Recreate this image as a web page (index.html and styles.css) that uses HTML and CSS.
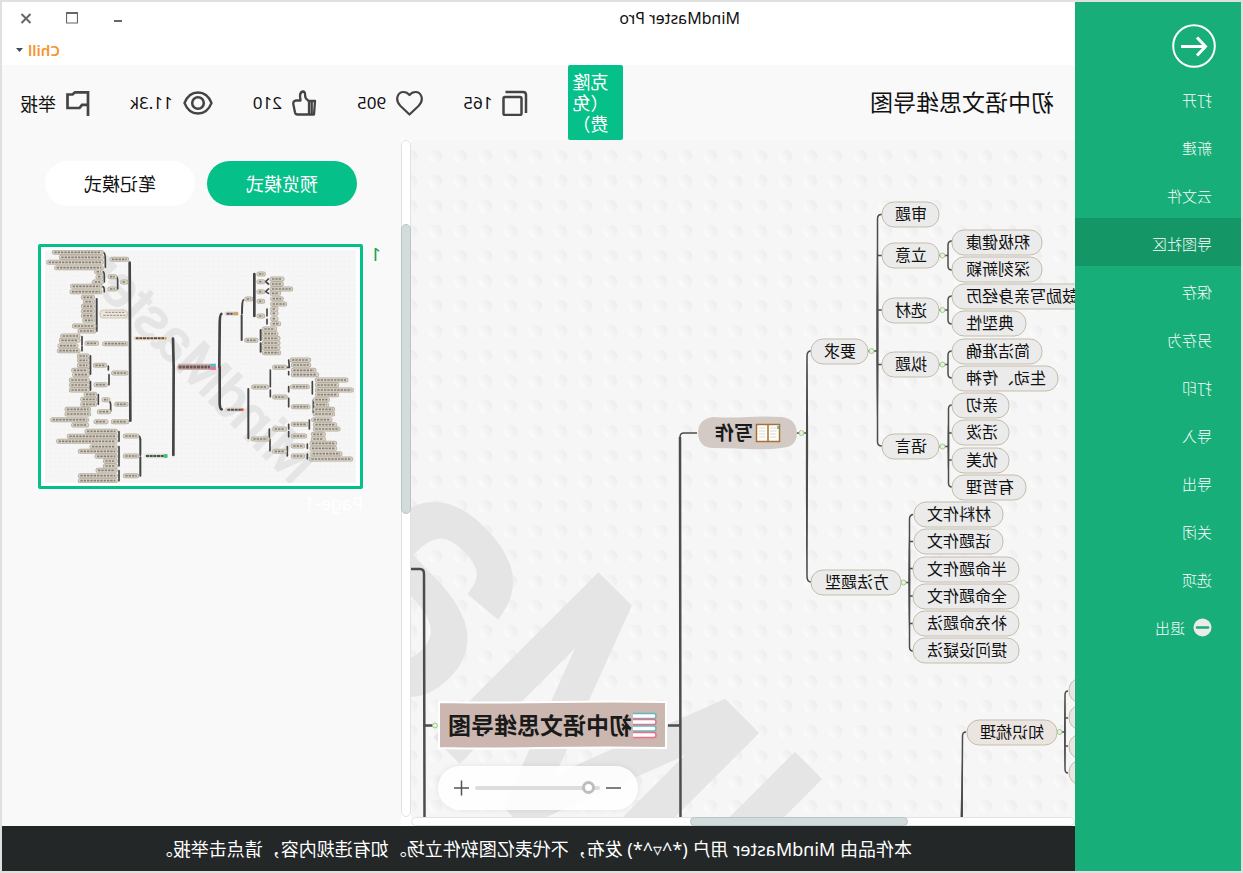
FILE: index.html
```html
<!DOCTYPE html>
<html lang="zh-CN">
<head>
<meta charset="utf-8">
<title>MindMaster Pro</title>
<link rel="stylesheet" href="styles.css">
</head>
<body>
<div class="app">
  <nav class="sidebar">
    <button class="back" aria-label="返回">
      <svg width="44" height="44" viewBox="0 0 44 44" fill="none" stroke="#fff"><circle cx="22" cy="22" r="20.8" stroke-width="2"/><path d="M35 22.500H10M19 13.500L10.500 22.500L19 31.500" stroke-width="3"/></svg>
    </button>
    <ul class="menu">
      <li><button class="item">打开</button></li>
      <li><button class="item">新建</button></li>
      <li><button class="item">云文件</button></li>
      <li><button class="item active">导图社区</button></li>
      <li><button class="item">保存</button></li>
      <li><button class="item">另存为</button></li>
      <li><button class="item">打印</button></li>
      <li><button class="item">导入</button></li>
      <li><button class="item">导出</button></li>
      <li><button class="item">关闭</button></li>
      <li><button class="item">选项</button></li>
      <li><button class="item"><svg width="19" height="19" viewBox="0 0 19 19"><circle cx="9.500" cy="9.500" r="9" fill="#ebebeb"/><path d="M4 9.500H15" stroke="#17ae79" stroke-width="2.500" stroke-linecap="round"/></svg>退出</button></li>
    </ul>
  </nav>
  <div class="main">
    <header class="titlebar">
      <div class="title-row">
        <h1>MindMaster Pro</h1>
        <div class="window-buttons">
          <button aria-label="最小化"><svg width="12" height="12" viewBox="0 0 12 12"><path d="M2 9H10" stroke="#666" stroke-width="2"/></svg></button>
          <button aria-label="最大化"><svg width="12" height="12" viewBox="0 0 12 12" fill="none" stroke="#666"><path d="M0 1H12" stroke-width="2"/><path d="M0.500 1V11H11.500V1" stroke-width="1.200"/></svg></button>
          <button aria-label="关闭"><svg width="12" height="12" viewBox="0 0 12 12"><path d="M1.500 2L10.500 11M10.500 2L1.500 11" stroke="#666" stroke-width="2"/></svg></button>
        </div>
      </div>
      <div class="user-row">
        <button class="user">Chill <svg width="7" height="4" viewBox="0 0 7 4"><path d="M0 0H7L3.500 4Z" fill="#444b5c"/></svg></button>
      </div>
    </header>

    <section class="toolbar">
      <h2>初中语文思维导图</h2>
      <div class="actions">
        <button class="clone">克隆（免费）</button>
        <div class="stats">
          <span class="stat"><svg width="26" height="26" viewBox="0 0 26 26" fill="none" stroke="#444" stroke-width="2.500"><rect x="6.500" y="7" width="18" height="18" rx="1.500"/><path d="M22.500 2H5Q2 2 2 5V23"/></svg>165</span>
          <span class="stat"><svg width="27" height="26" viewBox="0 0 27 26" fill="none" stroke="#444" stroke-width="2.200"><path d="M13.500 24.500L4.500 16C-1.500 10 1.500 2 7.500 2C10.500 2 12.300 3.500 13.500 5C14.700 3.500 16.500 2 19.500 2C25.500 2 28.500 10 22.500 16Z" stroke-linejoin="round"/></svg>905</span>
          <span class="stat"><svg width="25" height="26" viewBox="0 0 25 26" fill="none" stroke="#444" stroke-width="2.300" stroke-linejoin="round"><path d="M2 11H8V24.500H3ZM8 24.500V11.500L11 8.500Q12 7 12 4Q12 1.500 14 1.500Q17 2 17 6L16.500 10.500H21Q24.500 11 23.500 15L22 22.500Q21.500 24.500 19.500 24.500ZM5.300 12V24"/></svg>210</span>
          <span class="stat"><svg width="30" height="24" viewBox="0 0 30 24" fill="none" stroke="#444"><path d="M1.500 12C7 -2 23 -2 28.500 12C23 26 7 26 1.500 12Z" stroke-width="2.300"/><circle cx="15" cy="12" r="5.800" stroke-width="2.600"/></svg>11.3k</span>
          <button class="stat report"><svg width="24" height="26" viewBox="0 0 24 26" fill="none" stroke="#444" stroke-width="2.700"><path d="M2 1V26M2 2.300H15L17.500 4.500H22.500V18H10.500L8 14.800H2"/></svg>举报</button>
        </div>
      </div>
    </section>

    <div class="work">
      <div class="viewport">
        <div class="canvas">
          <svg class="mindmap" role="img" aria-label="思维导图画布">
            <defs>
              <linearGradient id="bump" x1="0" y1="0.200" x2="1" y2="0.800"><stop offset="0" stop-color="#ececec"/><stop offset="0.500" stop-color="#f4f4f4"/><stop offset="1" stop-color="#fdfdfd"/></linearGradient>
              <pattern id="bumps" width="25" height="25" x="2" y="4" patternUnits="userSpaceOnUse"><circle cx="12.500" cy="12.500" r="6.800" fill="url(#bump)"/></pattern>
            </defs>
            <rect width="100%" height="100%" fill="url(#bumps)"/>
            <text class="watermark" transform="translate(-36 1268) rotate(-45)">MindMaster</text>

            <g class="links thin">
              <path d="M123 101Q127 101 127 105V126Q127 130 123 130M127 115.500H136"/>
              <path d="M123 156Q127 156 127 160V180Q127 184 123 184M127 170H136"/>
              <path d="M123 211Q127 211 127 215V234Q127 238 123 238M127 224.500H136"/>
              <path d="M123 265Q126.500 265 126.500 269V343Q126.500 347 123 347M127 306.500H136M123 293H127M123 320H127"/>
              <path d="M193 74.500Q197.500 74 197.500 79V302Q197.500 306 193 306M193 115.500H197M193 170H197M193 224.500H197M197 211H207"/>
              <path d="M162 374.500Q165.500 375 165.500 379V507Q165.500 511 162 511M162 401.500H166M162 428.500H166M162 456H166M162 483.500H166M166 442.500H174"/>
              <path d="M264 211Q268 211 268 216V436Q268 442 264 442M268 293H278"/>
              <path d="M7 551Q10 551 10 555V629Q10 633 7 633M7 578H10M7 606H10M10 592H18"/>
              <path d="M109 592Q112.500 592 112.500 596L113 677M378 293H391Q395 293 395 297"/>
            </g>
            <g class="links thick">
              <path d="M395 297L394.500 677M395 585.500H407M641 585.500H652"/>
              <path d="M664 429H655Q651 429 651 434L650.500 677"/>
            </g>
            <g class="swell">
              <path d="M268 215Q265.500 300 268.500 436Q270 300 268 215ZM197.500 80Q195.500 200 197.500 300Q200 200 197.500 80ZM126.500 270Q125 306 126.500 343Q128.500 306 126.500 270ZM165.500 380Q164 440 165.500 506Q168 440 165.500 380ZM10 556Q9 592 10 628Q12 592 10 556ZM112.500 600L112 677H114.500Z"/>
            </g>

            <g class="collapse">
              <circle cx="132.500" cy="115.500" r="2.500"/><circle cx="132.500" cy="170" r="2.500"/><circle cx="132.500" cy="224.500" r="2.500"/><circle cx="132.500" cy="306.500" r="2.500"/>
              <circle cx="203.500" cy="211" r="2.500"/><circle cx="273.500" cy="293" r="2.500"/><circle cx="171.500" cy="442.500" r="2.500"/><circle cx="15.500" cy="592" r="2.500"/><circle cx="640" cy="585.500" r="2.500"/>
            </g>

            <g class="leaf">
              <rect x="136" y="62" width="57" height="25" rx="12"/><text x="164" y="80">审题</text>
              <rect x="136" y="103" width="57" height="25" rx="12"/><text x="164" y="121">立意</text>
              <rect x="136" y="158" width="57" height="25" rx="12"/><text x="164" y="176">选材</text>
              <rect x="136" y="212" width="57" height="25" rx="12"/><text x="164" y="230">拟题</text>
              <rect x="136" y="294" width="57" height="25" rx="12"/><text x="164" y="312">语言</text>

              <rect x="33" y="90" width="90" height="25" rx="12"/><text x="77" y="108">积极健康</text>
              <rect x="33" y="117" width="90" height="25" rx="12"/><text x="77" y="135">深刻新颖</text>
              <rect x="-15" y="144" width="138" height="25" rx="12"/><text x="53" y="162">鼓励写亲身经历</text>
              <rect x="49" y="171" width="74" height="25" rx="12"/><text x="85" y="189">典型性</text>
              <rect x="33" y="199" width="90" height="25" rx="12"/><text x="77" y="217">简洁准确</text>
              <rect x="17" y="226" width="106" height="25" rx="12"/><text x="69" y="244">生动、传神</text>
              <rect x="66" y="253" width="57" height="25" rx="12"/><text x="93" y="271">亲切</text>
              <rect x="66" y="280" width="57" height="25" rx="12"/><text x="93" y="298">活泼</text>
              <rect x="66" y="308" width="57" height="25" rx="12"/><text x="93" y="326">优美</text>
              <rect x="49" y="335" width="74" height="25" rx="12"/><text x="85" y="353">有哲理</text>

              <rect x="72" y="362" width="89" height="25" rx="12"/><text x="116" y="380">材料作文</text>
              <rect x="72" y="389" width="89" height="25" rx="12"/><text x="116" y="407">话题作文</text>
              <rect x="56" y="417" width="106" height="25" rx="12"/><text x="108" y="435">半命题作文</text>
              <rect x="56" y="444" width="106" height="25" rx="12"/><text x="108" y="462">全命题作文</text>
              <rect x="56" y="471" width="106" height="25" rx="12"/><text x="108" y="489">补充命题法</text>
              <rect x="56" y="498" width="106" height="25" rx="12"/><text x="108" y="516">提问设疑法</text>

              <rect x="207" y="199" width="57" height="25" rx="12"/><text x="235" y="217">要求</text>
              <rect x="174" y="430" width="90" height="25" rx="12"/><text x="218" y="448">方法题型</text>
            </g>
            <g class="leaf warm">
              <rect x="18" y="580" width="90" height="25" rx="12"/><text x="63" y="598">知识梳理</text>
              <rect x="-90" y="538" width="96" height="25" rx="12"/>
              <rect x="-90" y="565" width="96" height="25" rx="12"/>
              <rect x="-90" y="594" width="96" height="25" rx="12"/>
              <rect x="-90" y="620" width="96" height="25" rx="12"/>
            </g>

            <g>
              <path d="M294 277Q310 276 328 277T362 277Q377 279 377 293Q376 308 362 308Q345 308 328 309T294 308Q278 307 278 293Q279 278 294 277Z" fill="#d3cac5"/>
              <g fill="#fff" stroke="#a87332" stroke-width="1.500"><path d="M295.500 284.500H318.500V301.500H295.500ZM307 284.500V301.500"/></g>
              <path d="M298.500 288H305M298.500 291H305M298.500 294H305M298.500 297H305M309.500 288H316M309.500 291H316M309.500 294H316M309.500 297H316" stroke="#ddd5cb" stroke-width="1"/>
              <path d="M297 286V289" stroke="#2bb3a5" stroke-width="1.500"/>
              <text class="branch-text" x="322" y="300">写作</text>
            </g>
            <g>
              <path d="M409 562Q460 561 520 562T636 562V608Q590 609 530 608T409 608Z" fill="#cbb6b0" stroke="#fff" stroke-width="2"/>
              <g fill="#fff" stroke-width="1.500">
                <path d="M442 573.500H421Q419 573.500 419 576T421 578.500H442" stroke="#63b9be"/>
                <path d="M442 579.500H421Q419 579.500 419 582T421 584.500H442" stroke="#ea7089"/>
                <path d="M442 586H421Q419 586 419 588.500T421 591H442" stroke="#63b9be"/>
                <path d="M442 592.500H421Q419 592.500 419 595T421 597.500H442" stroke="#ea7089"/>
              </g>
              <text class="root-text" x="443" y="594">初中语文思维导图</text>
            </g>
          </svg>
          <div class="zoom">
            <button aria-label="缩小"><svg width="15" height="16" viewBox="0 0 15 16"><path d="M0 8H15" stroke="#555" stroke-width="1.500"/></svg></button>
            <input type="range" min="0" max="100" value="5" aria-label="缩放">
            <button aria-label="放大"><svg width="15" height="16" viewBox="0 0 15 16"><path d="M0 8H15M7.500 0.500V15.500" stroke="#555" stroke-width="1.500"/></svg></button>
          </div>
        </div>
        <div class="scroll-x"><div class="thumb-x"></div></div>
      </div>
      <div class="scroll-y"><div class="thumb-y"></div></div>

      <aside class="pages">
        <div class="tabs">
          <button class="tab selected">预览模式</button>
          <button class="tab">笔记模式</button>
        </div>
        <div class="page">
          <span class="number">1</span>
          <figure>
            <button class="preview" aria-label="Page-1">
              <svg viewBox="0 0 933 699">
                <defs>
                  <pattern id="specks" width="14" height="14" patternUnits="userSpaceOnUse"><circle cx="7" cy="7" r="3" fill="#f0f0f0"/></pattern>
                  <g id="nodes">
                    <path d="M103 67H244M124 82H244M86 97H244M110 113H244M276 88H320M230 125H242M234 140H242M224 156H244M270 140H284M158 169H240M156 185H240M270 177H284M308 156H318"/>
                    <path d="M190 202H218M196 215H218M190 229H218M190 243H218M190 257H218M194 271H218M163 288H222M180 303H222M128 318H174M124 331H174M120 347H168M118 362H174M201 340H230M254 341H318"/>
                    <path d="M178 378H202M178 391H202M178 406H202M161 421H202M164 434H202M154 450H202M154 465H202M154 480H202M226 406H254M228 464H256M281 429H318"/>
                    <path d="M198 493H224M188 508H224M188 523H224M141 538H206M141 552H206M98 569H200M161 585H200M252 509H264M238 545H266M290 523H318M228 575H258M280 575H320"/>
                    <path d="M201 604H286M148 619H286M116 634H286M316 618H350M216 650H286M181 664H286M231 679H286M256 693H286M256 708H286M316 678H350M234 721H286M181 737H286M181 752H286M316 737H350"/>
                    <path d="M717 132H730M717 155H728M717 185H728M717 214H728M717 258H728M756 147H786M756 162H784M756 177H812M756 190H776M758 206H784M758 222H794M758 237H768M758 250H768M758 266H768M758 281H776M680 207H692M680 331H708"/>
                    <path d="M733 297H764M733 311H768M733 325H774M733 339H774M733 353H774M733 368H776M816 390H866M820 405H866M820 421H882M820 434H890M764 412H794M892 450H978M892 465H950M892 480H994M892 494H950M818 470H862"/>
                    <path d="M886 509H922M888 524H920M886 538H938M886 552H938M820 530H864M764 501H796M701 471H740M881 569H930M886 584H944M886 597H954M820 583H858M880 613H910M880 627H910M820 618H854M764 597H794"/>
                    <path d="M876 640H944M876 655H944M820 648H848M878 671H960M874 687H992M820 678H848M764 664H794M700 627H742"/>
                  </g>
                </defs>
                <rect width="933" height="699" fill="#f6f6f6"/>
                <rect width="933" height="699" fill="url(#specks)"/>
                <text class="watermark mini" transform="translate(188 708) rotate(-45)">MindMaster</text>
                <g transform="translate(1008 -60) scale(-1 1)" fill="none">
                  <g stroke="#444" stroke-linecap="round">
                    <path d="M329 98L330 325L331 572M459 326L461 410L460 675M604 252Q599 254 599 290L598 411M599 411V520Q600 538 605 538M703 132V258" stroke-width="8"/>
                    <path d="M230 207V303M670 210Q666 210 666 250M665 256V330M685 477V625M722 300V330M722 340V365M211 378V432M211 455V480M361 628V675M361 682V737" stroke-width="6"/>
                    <path d="M250 68Q256 68 256 90V112M248 125Q253 125 253 140V156M248 170Q253 170 253 185M288 140Q293 140 293 156V177M186 320V345M186 350V362M265 408V420M267 434V464M235 494V523M250 509Q272 510 272 523V544M297 605V634M297 650V708M297 722V752M357 618Q361 620 361 630M737 155L745 147M737 155L745 162M737 185L745 177M737 185L745 190M741 237V258M741 268V282M751 420V470M751 480V500M806 390L808 412L800 412M806 425V434M806 470V485M806 505V530M877 455V492M880 510V548M748 597V625M750 628V662M868 570V597M806 583V597M806 605V620M802 665V650M802 668V678M862 642V655M862 672V686" stroke-width="5"/>
                  </g>
                  <g stroke-linecap="round"><use href="#nodes" stroke="#b3ab9b" stroke-width="15"/><use href="#nodes" stroke="#d8d2c6" stroke-width="11"/></g>
                  <rect x="240" y="240" width="82" height="24" rx="10" fill="#eee6da" stroke="#b9b1a1" stroke-width="2"/>
                  <use href="#nodes" stroke="#857f78" stroke-width="5" stroke-dasharray="7 3"/>
                  <path d="M256 247H316M250 256H316" stroke="#8f8a83" stroke-width="3" stroke-dasharray="7 3"/>
                  <path d="M345 325H438" stroke="#f5e4d3" stroke-width="13" stroke-linecap="round"/>
                  <path d="M380 678H438" stroke="#cddccf" stroke-width="13" stroke-linecap="round"/>
                  <path d="M620 539H668M620 251H650" stroke="#ddd5cf" stroke-width="13" stroke-linecap="round"/>
                  <path d="M347 325H438M378 678H432M622 539H660M620 251H638" stroke="#544c46" stroke-width="6" stroke-dasharray="9 2"/>
                  <path d="M640 251H654" stroke="#cfa35a" stroke-width="9"/><path d="M432 678H442" stroke="#3fc07c" stroke-width="11"/><path d="M660 539H670" stroke="#b5412f" stroke-width="6"/><path d="M434 325H440" stroke="#d4b458" stroke-width="7"/>
                  <path d="M470 411L476 401H588V420H476Z" fill="#cbb1ae"/>
                  <path d="M476 411H570" stroke="#6e5552" stroke-width="9" stroke-dasharray="9 2"/>
                  <path d="M571 406H587" stroke="#4fc0cc" stroke-width="9"/><path d="M571 415H587" stroke="#f06f94" stroke-width="9"/>
                </g>
              </svg>
            </button>
            <figcaption>Page-1</figcaption>
          </figure>
        </div>
      </aside>
    </div>

    <footer>本作品由 MindMaster 用户 (*^▿^*) 发布，不代表亿图软件立场。如有违规内容，请点击举报。</footer>
  </div>
</div>
</body>
</html>
```
FILE: styles.css
```css
* { box-sizing: border-box; }

body {
  margin: 0;
  font-family: "Noto Sans", "Noto Sans CJK SC", sans-serif;
  color: #111;
}

button {
  margin: 0;
  padding: 0;
  border: 0;
  background: none;
  font: inherit;
  color: inherit;
  cursor: pointer;
}

svg { display: block; flex: none; }

/* The interface is shown as seen in a mirror. */
.app {
  display: flex;
  height: 100vh;
  min-height: 640px;
  border: 2px solid #e0e0e0;
  background: #fff;
  transform: scaleX(-1);
}

.sidebar {
  flex: none;
  width: 166px;
  padding-top: 22px;
  background: #17ae79;
  color: #fff;
}

.back { display: block; margin-left: 25px; }

.menu {
  margin: 6px 0 0;
  padding: 0;
  list-style: none;
  font-family: "Noto Sans CJK SC", sans-serif;
  font-size: 15px;
  font-weight: 300;
}

.item {
  display: flex;
  align-items: center;
  gap: 8px;
  width: 100%;
  height: 48px;
  padding: 2px 0 0 29px;
  text-align: left;
}

.item.active { background: #149666; }

.main {
  display: flex;
  flex: 1;
  flex-direction: column;
  min-width: 0;
}

.title-row {
  display: flex;
  align-items: center;
  justify-content: space-between;
  height: 32px;
  padding: 0 18px 0 335px;
}

h1, h2 { margin: 0; font-weight: 400; }

h1 { font-size: 16px; line-height: 20px; }

.window-buttons { display: flex; gap: 34px; }

.user-row {
  display: flex;
  align-items: center;
  justify-content: flex-end;
  height: 31px;
  padding-right: 14px;
}

.user {
  display: flex;
  align-items: center;
  gap: 5px;
  color: #f7932f;
  font-size: 15px;
  font-weight: 600;
}

.toolbar {
  display: flex;
  flex: none;
  align-items: center;
  justify-content: space-between;
  height: 75px;
  padding: 0 18px 0 21px;
  background: #f9f9f9;
  font-size: 18px;
}

.toolbar h2 { padding-bottom: 4px; font-size: 23px; }

.actions { display: flex; align-items: center; gap: 40px; }

.clone {
  width: 55px;
  height: 75px;
  padding: 0 4px 0 15px;
  border-radius: 2px;
  background: #05c088;
  color: #fff;
  font-family: "Noto Sans CJK SC", sans-serif;
  line-height: 21px;
  text-align: left;
}

.stats { display: flex; gap: 40px; }

.stat {
  display: flex;
  align-items: center;
  gap: 10px;
  font-size: 17px;
}

.stat.report { font-size: 18px; }

.work { display: flex; flex: 1; min-height: 0; }

.viewport { display: flex; flex: 1; flex-direction: column; min-width: 0; }

.canvas {
  position: relative;
  flex: 1;
  min-height: 0;
  overflow: hidden;
  background: #f6f6f6;
}

.mindmap { width: 100%; height: 100%; }

.watermark {
  fill: #e5e5e5;
  stroke: #e5e5e5;
  stroke-width: 10px;
  font-family: "Liberation Sans", sans-serif;
  font-size: 325px;
}

.watermark.mini { font-size: 170px; stroke-width: 6px; }

.links { fill: none; stroke: #4c4c4c; }
.thin { stroke-width: 1.5; }
.thick { stroke-width: 2.5; }
.swell { fill: #4c4c4c; }

.collapse { fill: #e4f3dd; stroke: #9ccb8b; }

.leaf rect { fill: #ebebeb; stroke: #c5bdab; }
.leaf.warm rect { fill: #ebe5e2; }

.leaf text {
  fill: #111;
  font-family: "Noto Sans CJK SC", sans-serif;
  font-size: 16px;
  text-anchor: middle;
}

.branch-text,
.root-text {
  fill: #1a1a1a;
  font-family: "Noto Sans CJK SC", sans-serif;
  font-size: 19px;
  font-weight: 700;
}

.root-text { font-size: 23px; }

.zoom {
  position: absolute;
  right: 27px;
  bottom: 7px;
  display: flex;
  align-items: center;
  justify-content: center;
  gap: 6px;
  width: 200px;
  height: 44px;
  border-radius: 22px;
  background: rgba(255, 255, 255, 0.88);
  box-shadow: 0 0 6px rgba(0, 0, 0, 0.08);
}

.zoom input {
  width: 125px;
  height: 14px;
  margin: 0;
  background: none;
  appearance: none;
}

.zoom input::-webkit-slider-runnable-track {
  height: 4px;
  border-radius: 2px;
  background: #ddd;
}

.zoom input::-webkit-slider-thumb {
  width: 13px;
  height: 13px;
  margin-top: -5px;
  border: 3px solid #bdbdbd;
  border-radius: 50%;
  background: #fff;
  appearance: none;
}

.scroll-x {
  flex: none;
  height: 9px;
  border: 1px solid #e2e2e2;
  border-radius: 5px;
  background: #fff;
}

.thumb-x {
  width: 33%;
  height: 9px;
  margin: -1px 0 0 25%;
  border: 1px solid #b9c6c7;
  border-radius: 5px;
  background: #d3dcdd;
}

.scroll-y {
  flex: none;
  width: 10px;
  margin-bottom: 9px;
  padding-top: 83px;
  border: 1px solid #e2e2e2;
  border-radius: 5px;
  background: #fff;
}

.thumb-y {
  width: 10px;
  height: 49%;
  margin-left: -1px;
  border: 1px solid #b9c6c7;
  border-radius: 5px;
  background: #d3dcdd;
}

.pages {
  flex: none;
  width: 399px;
  padding: 21px 36px 0 20px;
  background: #f9f9f9;
  font-size: 18px;
}

.tabs { display: flex; gap: 12px; padding-left: 24px; }

.tab {
  width: 150px;
  height: 45px;
  padding-bottom: 2px;
  border-radius: 23px;
  background: #fff;
}

.tab.selected { background: #05c088; color: #fff; }

.page { display: flex; margin-top: 38px; }

.number {
  width: 18px;
  color: #17a34a;
  line-height: 20px;
}

.page figure { flex: 1; margin: 0; }

.preview {
  display: block;
  width: 100%;
  padding: 3px 4px;
  border: 3px solid #05c088;
  border-radius: 2px;
  background: #fff;
}

.preview svg { width: 100%; }

.page figcaption { color: #fff; line-height: 28px; }

footer {
  flex: none;
  height: 45px;
  padding: 0 163px;
  background: #232728;
  color: #fff;
  font-size: 18px;
  line-height: 46px;
  white-space: nowrap;
}
```
